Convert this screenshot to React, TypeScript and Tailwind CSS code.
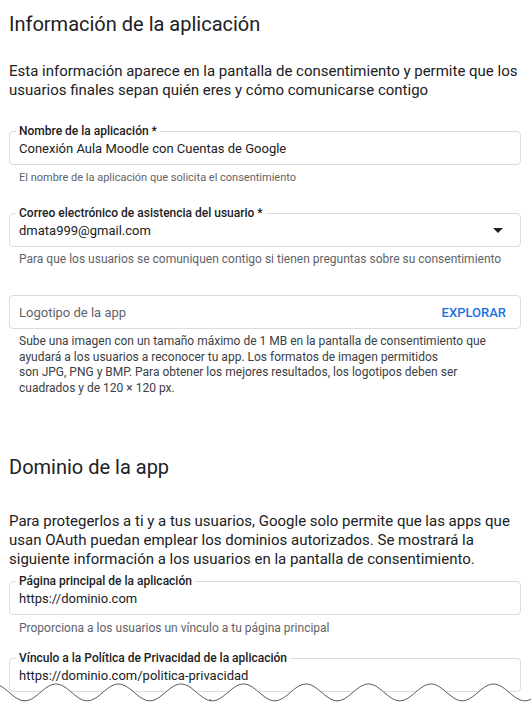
import React from "react";

const font = { fontFamily: "Roboto, 'Noto Sans', Arial, sans-serif" };

function Wave() {
  const pts: string[] = [];
  for (let x = 0; x <= 531; x += 1) {
    const y = 12.4 - 8.4 * Math.cos((2 * Math.PI * (x - 56)) / 62.5);
    pts.push(`${x},${y.toFixed(2)}`);
  }
  const line = "M" + pts.join(" L");
  const fill = line + " L531,22 L0,22 Z";
  return (
    <svg className="absolute left-0 bottom-0" width="531" height="22" viewBox="0 0 531 22">
      <path d={fill} fill="#ffffff" />
      <path d={line} fill="none" stroke="#5f5f5f" strokeWidth="1" />
    </svg>
  );
}

function OutlinedField({
  label,
  value,
  dropdown,
}: {
  label: string;
  value: string;
  dropdown?: boolean;
}) {
  return (
    <div className="relative h-[34px] rounded-[4px] border border-[#dadce0] flex items-center pl-[9px] pr-[10px]">
      <span className="absolute -top-[9px] left-[6px] bg-white px-[3px] text-[12px] leading-4 font-medium text-[#202124]">
        {label}
      </span>
      <span className="flex-1 text-[13px] leading-5 text-[#202124] pt-[1px]">{value}</span>
      {dropdown && (
        <svg width="24" height="24" viewBox="0 0 24 24" className="text-[#202124]">
          <path d="M7 10l5 5 5-5z" fill="currentColor" />
        </svg>
      )}
    </div>
  );
}

export default function App() {
  return (
    <div className="relative h-[702px] overflow-hidden bg-white" style={font}>
      <div className="pt-[10px] pl-[9px] pr-[10px]">
        <h1 className="text-[20px] leading-[28px] font-normal text-[#202124]">Información de la aplicación</h1>
        <p className="mt-[24px] text-[15px] leading-[19px] text-[#202124] whitespace-nowrap">
          Esta información aparece en la pantalla de consentimiento y permite que los
          <br />
          usuarios finales sepan quién eres y cómo comunicarse contigo
        </p>

        <div className="mt-[31px]">
          <OutlinedField label="Nombre de la aplicación *" value="Conexión Aula Moodle con Cuentas de Google" />
          <p className="mt-[5px] pl-[10px] text-[11px] leading-4 text-[#5f6368]">
            El nombre de la aplicación que solicita el consentimiento
          </p>
        </div>

        <div className="mt-[27px]">
          <OutlinedField label="Correo electrónico de asistencia del usuario *" value="dmata999@gmail.com" dropdown />
          <p className="mt-[4px] pl-[10px] text-[12px] leading-4 text-[#5f6368]">
            Para que los usuarios se comuniquen contigo si tienen preguntas sobre su consentimiento
          </p>
        </div>

        <div className="mt-[28px]">
          <div className="h-[34px] rounded-[4px] border border-[#dadce0] flex items-center pl-[9px] pr-[14px]">
            <span className="flex-1 text-[13px] leading-5 text-[#5f6368] pt-[1px]">Logotipo de la app</span>
            <span className="text-[13px] leading-5 font-medium text-[#1a73e8] pt-[1px]">EXPLORAR</span>
          </div>
          <p className="mt-[5px] pl-[10px] text-[12px] leading-[15.5px] text-[#3c4043] whitespace-nowrap">
            Sube una imagen con un tamaño máximo de 1 MB en la pantalla de consentimiento que
            <br />
            ayudará a los usuarios a reconocer tu app. Los formatos de imagen permitidos
            <br />
            son JPG, PNG y BMP. Para obtener los mejores resultados, los logotipos deben ser
            <br />
            cuadrados y de 120 × 120 px.
          </p>
        </div>

        <h2 className="mt-[57px] text-[20px] leading-[28px] font-normal text-[#202124]">Dominio de la app</h2>
        <p className="mt-[31px] text-[15px] leading-[19px] text-[#202124] whitespace-nowrap">
          Para protegerlos a ti y a tus usuarios, Google solo permite que las apps que
          <br />
          usan OAuth puedan emplear los dominios autorizados. Se mostrará la
          <br />
          siguiente información a los usuarios en la pantalla de consentimiento.
        </p>

        <div className="mt-[12px]">
          <OutlinedField label="Página principal de la aplicación" value="https://dominio.com" />
          <p className="mt-[5px] pl-[10px] text-[12px] leading-4 text-[#5f6368]">
            Proporciona a los usuarios un vínculo a tu página principal
          </p>
        </div>

        <div className="mt-[22px]">
          <OutlinedField
            label="Vínculo a la Política de Privacidad de la aplicación"
            value="https://dominio.com/politica-privacidad"
          />
          <p className="mt-[5px] pl-[10px] text-[12px] leading-4 text-[#5f6368]">
            Proporciona a los usuarios un vínculo a tu política de privacidad pública
          </p>
        </div>
      </div>
      <Wave />
    </div>
  );
}
